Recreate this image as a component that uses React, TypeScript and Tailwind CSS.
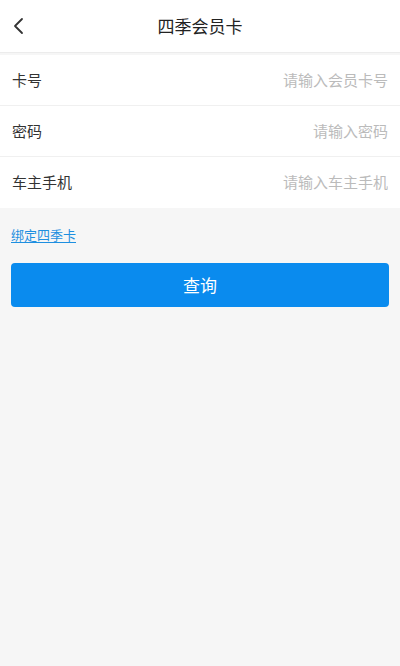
import { useState } from "react";

const font = { fontFamily: '"Noto Sans CJK SC", "Noto Sans", sans-serif' };

function Row({ label, placeholder, type = "text" }: { label: string; placeholder: string; type?: string }) {
  const [v, setV] = useState("");
  return (
    <div className="flex items-center h-[51px] bg-white px-3 border-b border-[#f0f0f0] last:border-b-0">
      <span className="text-[15px] text-[#333] w-24 shrink-0">{label}</span>
      <input
        type={type}
        value={v}
        onChange={(e) => setV(e.target.value)}
        placeholder={placeholder}
        className="flex-1 min-w-0 text-right text-[15px] text-[#333] placeholder:text-[#bbbbbb] outline-none bg-transparent"
        style={font}
      />
    </div>
  );
}

export default function App() {
  return (
    <div className="w-[400px] h-[666px] bg-[#f6f6f6] flex flex-col" style={font}>
      <header className="relative h-[53px] bg-white flex items-center justify-center border-b border-[#ececec]">
        <button className="absolute left-0 top-0 h-full pl-[12px] pr-2 flex items-center text-[#333]">
          <svg width="12" height="18" viewBox="0 0 12 18" fill="none">
            <path d="M10 2L3 9l7 7" stroke="currentColor" strokeWidth="1.8" strokeLinecap="round" strokeLinejoin="round" />
          </svg>
        </button>
        <h1 className="text-[17px] text-[#222]">四季会员卡</h1>
      </header>

      <div className="mt-[2px] flex flex-col">
        <Row label="卡号" placeholder="请输入会员卡号" />
        <Row label="密码" placeholder="请输入密码" type="password" />
        <Row label="车主手机" placeholder="请输入车主手机" />
      </div>

      <div className="px-[11px] pt-[13px]">
        <a href="#" className="text-[13px] text-[#1e8fe0] underline underline-offset-2">绑定四季卡</a>
      </div>

      <div className="px-[11px] pt-[18px]">
        <button className="w-full h-[44px] rounded-[4px] bg-[#0a8bee] text-white text-[17px]">查询</button>
      </div>
    </div>
  );
}
